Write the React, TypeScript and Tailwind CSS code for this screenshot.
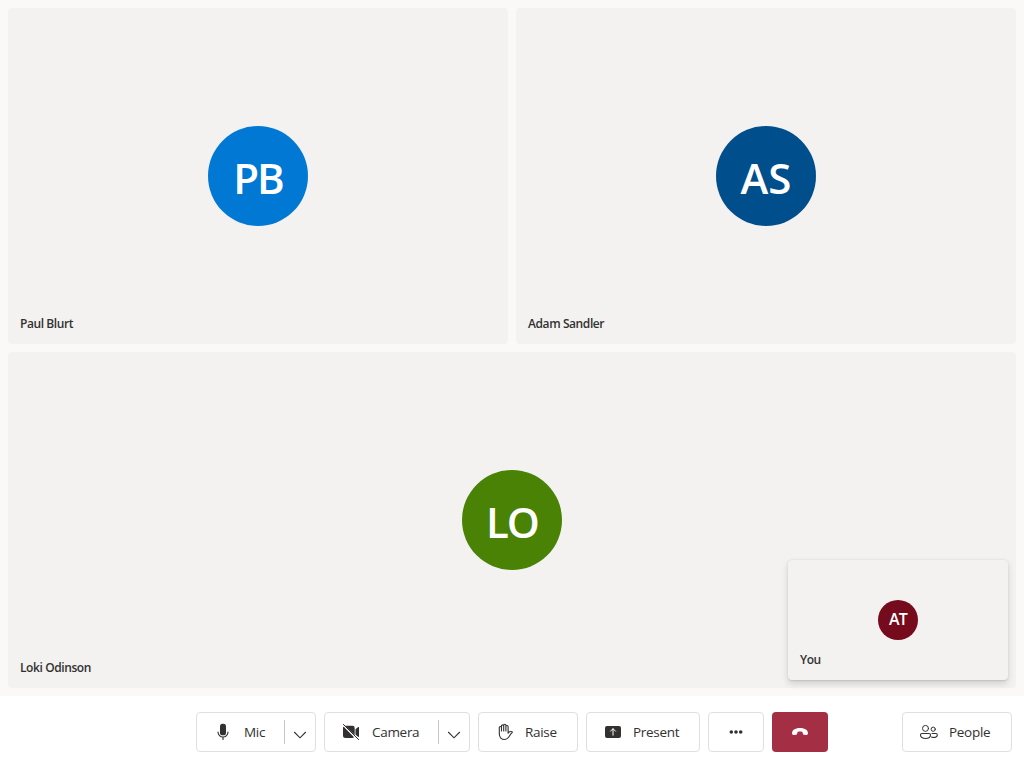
import type { ReactNode } from "react";

type TileProps = { name: string; initials: string; color: string; className?: string };

function Tile({ name, initials, color, className = "" }: TileProps) {
  return (
    <section className={`flex flex-col rounded bg-[#f3f2f1] ${className}`}>
      <div className="flex h-full items-center justify-center">
        <div className={`flex size-[100px] items-center justify-center rounded-full pt-[3px] text-[42px] leading-none font-semibold text-white ${color}`}>
          {initials}
        </div>
      </div>
      <div className="-mt-7 h-7 px-3 text-[12px] leading-4 font-semibold tracking-[-0.41px]">{name}</div>
    </section>
  );
}

const box = "flex h-10 items-center rounded border border-[#e1dfdd] bg-white text-[13.5px] tracking-[-0.3px]";

function Control({ icon, label, className }: { icon: ReactNode; label: string; className: string }) {
  return (
    <button className={`${box} ${className}`}>
      {icon}
      <span className="ml-2.5 leading-5 whitespace-nowrap">{label}</span>
    </button>
  );
}

function SplitControl({ icon, label, className }: { icon: ReactNode; label: string; className: string }) {
  return (
    <div className={`${box} ${className}`}>
      <button className="flex flex-1 items-center pl-4">
        {icon}
        <span className="ml-[11px] leading-5">{label}</span>
      </button>
      <span className="h-6 w-px bg-[#c8c6c4]" />
      <button aria-label="Options" className="flex h-full w-[30px] items-center justify-center">
        <svg width="14" height="10" viewBox="0 0 14 10" className="mt-1.5" fill="none" stroke="currentColor" strokeWidth="1.1">
          <path d="M1.2 2 7 7.8 12.8 2" />
        </svg>
      </button>
    </div>
  );
}

function Icon({ children }: { children: ReactNode }) {
  return (
    <svg width="20" height="20" viewBox="0 0 20 20" className="shrink-0" fill="none" stroke="currentColor" strokeLinecap="round" strokeLinejoin="round">
      {children}
    </svg>
  );
}

const MicIcon = (
  <Icon>
    <rect x="7" y="1.7" width="6" height="11.6" rx="2.6" fill="currentColor" stroke="none" />
    <path d="M5 10a5 5 0 0 0 10 0M10 15v2.5" strokeWidth="1.15" />
  </Icon>
);

const CameraOffIcon = (
  <Icon>
    <path d="M4.1 3.8H11.5A2.2 2.2 0 0 1 13.7 6V13L4.1 3.8ZM2.5 4.5 13 15.2A2.5 2.5 0 0 1 11 16H4.5A2.5 2.5 0 0 1 2 13.5V6A3 3 0 0 1 2.5 4.5ZM14.5 7.2 17.2 5.1Q18 4.7 18 5.5V14.4Q18 15.2 17.2 14.8L14.5 12.7Z" fill="currentColor" stroke="none" />
    <path d="m2.4 2.4 15.2 15.2" />
  </Icon>
);

const HandIcon = (
  <Icon>
    <path d="M4.3 10.5V5.6a1.1 1.1 0 0 1 2.2 0V9 4a1.1 1.1 0 0 1 2.2 0v5V3.3a1.1 1.1 0 0 1 2.2 0V9 4.6a1.1 1.1 0 0 1 2.2 0v6.6c.8-1.1 2.3-1.9 3.8-1.5.5.2.6.6.2 1-1.6 1.4-2.4 2.9-3.5 4.6-1 1.5-2.3 2.2-4 2.2-3.1 0-5.3-2.1-5.3-5.4Z" strokeWidth="1.1" />
  </Icon>
);

const PresentIcon = (
  <Icon>
    <rect x="2" y="4" width="16" height="12" rx="2" fill="currentColor" stroke="none" />
    <path d="M10 13.2V6.8M7.5 9.2 10 6.7l2.5 2.5" stroke="white" />
  </Icon>
);

const PeopleIcon = (
  <Icon>
    <circle cx="6.5" cy="6.4" r="3" />
    <circle cx="14.2" cy="7.2" r="2.1" />
    <path d="M3 11.5h7a1.5 1.5 0 0 1 1.5 1.5c0 2-2 3.5-5 3.5s-5-1.5-5-3.5A1.5 1.5 0 0 1 3 11.5ZM13 11.5h3.8A1.5 1.5 0 0 1 18.3 13c0 1.7-1.9 2.6-4.3 2.4-.6 0-1-.1-1.5-.3" strokeWidth="1.1" />
  </Icon>
);

export default function App() {
  return (
    <div className="flex h-screen w-full flex-col overflow-hidden bg-white font-['Segoe_UI','Open_Sans',sans-serif] text-[#323130]">
      <main className="relative grid min-h-0 flex-1 grid-cols-2 grid-rows-2 gap-2 bg-[#faf9f8] p-2">
        <Tile name="Paul Blurt" initials="PB" color="bg-[#0078d4] tracking-[-2px]" />
        <Tile name="Adam Sandler" initials="AS" color="bg-[#004e8c]" />
        <Tile name="Loki Odinson" initials="LO" color="bg-[#498205] tracking-[-2px]" className="col-span-2" />
        <aside className="absolute right-4 bottom-4 flex h-[120px] w-[220px] flex-col rounded bg-[#f3f2f1] shadow-[0_3.2px_7.2px_rgba(0,0,0,0.132),0_0.6px_1.8px_rgba(0,0,0,0.108)]">
          <div className="flex h-full items-center justify-center">
            <div className="flex size-10 items-center justify-center rounded-full bg-[#750b1c] pb-0.5 text-[16px] leading-none font-semibold tracking-[-0.7px] text-white">AT</div>
          </div>
          <div className="-mt-7 h-7 px-3 text-[12px] leading-4 font-semibold tracking-[-0.41px]">You</div>
        </aside>
      </main>
      <footer className="grid h-[72px] shrink-0 grid-cols-[1fr_auto_1fr] items-center px-3">
        <div className="col-start-2 flex gap-2">
          <SplitControl icon={MicIcon} label="Mic" className="w-[120px]" />
          <SplitControl icon={CameraOffIcon} label="Camera" className="w-[146px]" />
          <Control icon={HandIcon} label="Raise" className="w-[100px] pl-4" />
          <Control icon={PresentIcon} label="Present" className="w-[114px] pl-4" />
          <button aria-label="More" className={`${box} w-14 justify-center`}>
            <Icon>
              <g fill="currentColor" stroke="none">
                <circle cx="5.3" cy="10" r="1.8" />
                <circle cx="10" cy="10" r="1.8" />
                <circle cx="14.7" cy="10" r="1.8" />
              </g>
            </Icon>
          </button>
          <button aria-label="Leave" className="flex h-10 w-14 items-center justify-center rounded bg-[#a42e43] text-white">
            <Icon>
              <path d="M2.1 11.2C1.8 8.3 4.9 6 10 6s8.2 2.3 7.9 5.2l-.1.8c-.2.8-.9 1.2-1.7 1.1l-2-.4c-.7-.1-1.2-.6-1.3-1.3l-.3-1.5c-1.7-.6-3.3-.6-5 0l-.3 1.5c-.1.7-.6 1.2-1.3 1.3l-2 .4c-.8.1-1.5-.3-1.7-1.1Z" fill="currentColor" stroke="none" />
            </Icon>
          </button>
        </div>
        <Control icon={PeopleIcon} label="People" className="w-[110px] justify-self-end pl-4" />
      </footer>
    </div>
  );
}
